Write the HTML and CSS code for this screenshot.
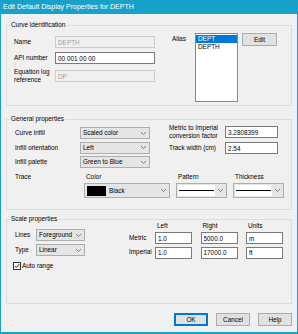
FILE: index.html
```html
<!DOCTYPE html>
<html>
<head>
  <title>Edit Default Display Properties for DEPTH</title>
  <link rel="stylesheet" href="styles.css">
</head>
<body>
  <div class="window">
    <div class="titlebar">Edit Default Display Properties for DEPTH</div>

    <div class="client">
      <fieldset class="group group-ident">
        <legend>Curve identification</legend>
        <div class="ident">
          <div class="ident-fields">
            <label for="name">Name</label>
            <input class="text" type="text" id="name" value="DEPTH" disabled>
            <label for="api">API number</label>
            <input class="text" type="text" id="api" value="00 001 00 00">
            <label for="eqref">Equation log<br>reference</label>
            <input class="text" type="text" id="eqref" value="DP" disabled>
          </div>
          <span class="alias-label">Alias</span>
          <div class="listbox">
            <div class="item selected">DEPT</div>
            <div class="item">DEPTH</div>
          </div>
          <button type="button" class="btn edit-btn">Edit</button>
        </div>
      </fieldset>

      <fieldset class="group group-general">
        <legend>General properties</legend>
        <div class="general">
          <div class="general-top">
            <div class="infill-fields">
              <span class="lbl">Curve infill</span>
              <div class="combo"><span>Scaled color</span><svg width="5" height="3" viewBox="0 0 5 3"><polyline points="0,0 2.5,2.5 5,0" fill="none" stroke="#666" stroke-width="0.8"/></svg></div>
              <span class="lbl">Infill orientation</span>
              <div class="combo"><span>Left</span><svg width="5" height="3" viewBox="0 0 5 3"><polyline points="0,0 2.5,2.5 5,0" fill="none" stroke="#666" stroke-width="0.8"/></svg></div>
              <span class="lbl">Infill palette</span>
              <div class="combo"><span>Green to Blue</span><svg width="5" height="3" viewBox="0 0 5 3"><polyline points="0,0 2.5,2.5 5,0" fill="none" stroke="#666" stroke-width="0.8"/></svg></div>
            </div>
            <div class="factor-fields">
              <label for="factor">Metric to Imperial<br>conversion factor</label>
              <input class="text" type="text" id="factor" value="3.2808399">
              <label for="track">Track width (cm)</label>
              <input class="text" type="text" id="track" value="2.54">
            </div>
          </div>
          <div class="trace">
            <span class="lbl">Trace</span>
            <span class="col-head">Color</span>
            <span class="col-head">Pattern</span>
            <span class="col-head">Thickness</span>
            <span></span>
            <div class="combo tall"><span class="swatch-wrap"><span class="swatch"></span>Black</span><svg width="5" height="3" viewBox="0 0 5 3"><polyline points="0,0 2.5,2.5 5,0" fill="none" stroke="#666" stroke-width="0.8"/></svg></div>
            <div class="combo tall"><span class="line-sample"><span class="line"></span></span><svg width="5" height="3" viewBox="0 0 5 3"><polyline points="0,0 2.5,2.5 5,0" fill="none" stroke="#666" stroke-width="0.8"/></svg></div>
            <div class="combo tall"><span class="line-sample"><span class="line"></span></span><svg width="5" height="3" viewBox="0 0 5 3"><polyline points="0,0 2.5,2.5 5,0" fill="none" stroke="#666" stroke-width="0.8"/></svg></div>
          </div>
        </div>
      </fieldset>

      <fieldset class="group group-scale">
        <legend>Scale properties</legend>
        <div class="scale">
          <div class="scale-left">
            <div class="scale-fields">
              <span class="lbl">Lines</span>
              <div class="combo"><span>Foreground</span><svg width="5" height="3" viewBox="0 0 5 3"><polyline points="0,0 2.5,2.5 5,0" fill="none" stroke="#666" stroke-width="0.8"/></svg></div>
              <span class="lbl">Type</span>
              <div class="combo"><span>Linear</span><svg width="5" height="3" viewBox="0 0 5 3"><polyline points="0,0 2.5,2.5 5,0" fill="none" stroke="#666" stroke-width="0.8"/></svg></div>
            </div>
            <div class="check-row">
              <svg width="8" height="8" viewBox="0 0 8 8"><rect x="0.5" y="0.5" width="7" height="7" fill="#fff" stroke="#333"/><polyline points="1.8,4 3.3,5.6 6.3,2.2" fill="none" stroke="#222" stroke-width="1"/></svg>
              <span>Auto range</span>
            </div>
          </div>
          <div class="range-grid">
            <span></span>
            <span class="col-head">Left</span>
            <span class="col-head">Right</span>
            <span class="col-head">Units</span>
            <span class="lbl">Metric</span>
            <input class="text" type="text" value="1.0">
            <input class="text" type="text" value="5000.0">
            <input class="text" type="text" value="m">
            <span class="lbl">Imperial</span>
            <input class="text" type="text" value="1.0">
            <input class="text" type="text" value="17000.0">
            <input class="text" type="text" value="ft">
          </div>
        </div>
      </fieldset>

      <div class="buttons">
        <button type="button" class="btn default">OK</button>
        <button type="button" class="btn">Cancel</button>
        <button type="button" class="btn">Help</button>
      </div>
    </div>
  </div>
</body>
</html>
```

FILE: styles.css
```css
* {
  box-sizing: border-box;
}

body {
  margin: 0;
  font-family: "Liberation Sans", Arial, sans-serif;
  font-size: 6.4px;
  line-height: 8px;
  color: #000;
  background: #f0f0f0;
}

.window {
  width: 298px;
  height: 334px;
  background: #f0f0f0;
  border: 1px solid #19a2c9;
  border-top: none;
  border-bottom-width: 2px;
  display: flex;
  flex-direction: column;
}

.titlebar {
  height: 14px;
  background: #19a2c9;
  color: #fff;
  font-size: 7px;
  line-height: 14px;
  padding-left: 2px;
}

.client {
  padding: 7px 5px 0;
}

fieldset.group {
  margin: 0;
  padding: 0;
  border: 1px solid #dcdcdc;
  min-width: 0;
}

legend {
  margin-left: 3px;
  padding: 0 1px;
  line-height: 8px;
  height: 8px;
}

.text {
  display: block;
  width: 100%;
  height: 12px;
  margin: 0;
  padding: 0 2px;
  border: 1px solid #7a7a7a;
  background: #fff;
  font: inherit;
  color: #000;
  outline: none;
}

.text:disabled {
  background: #f0f0f0;
  border-color: #cccccc;
  color: #a0a0a0;
}

.btn {
  height: 13px;
  margin: 0;
  padding: 0;
  border: 1px solid #adadad;
  background: #e1e1e1;
  font: inherit;
  color: #000;
}

.combo {
  height: 12px;
  border: 1px solid #adadad;
  background: #e5e5e5;
  display: flex;
  align-items: center;
  justify-content: space-between;
  padding-left: 2px;
  padding-right: 3px;
}

.combo.tall {
  height: 15px;
  padding-left: 2px;
}

/* curve identification */
.ident {
  display: flex;
  align-items: flex-start;
  padding: 4px 6px 3px 7px;
}

.ident-fields {
  margin-top: 3px;
  display: grid;
  grid-template-columns: 41px 100px;
  grid-template-rows: 12px 12px 16px;
  row-gap: 4px;
  align-items: center;
}

.alias-label {
  margin-left: 17px;
  margin-top: 2px;
  width: 23px;
}

.listbox {
  width: 43px;
  height: 69px;
  border: 1px solid #828790;
  background: #fff;
  padding: 1px 0;
}

.listbox .item {
  height: 8px;
  padding-left: 2px;
  margin: 0 0 0 0;
}

.listbox .item.selected {
  background: #0078d7;
  color: #fff;
}

.edit-btn {
  margin-left: 4px;
  width: 35px;
}

/* general properties */
.group-general {
  margin-top: 9px !important;
}

.general {
  padding: 1px 6px 11px 7px;
}

.general-top {
  display: flex;
  align-items: flex-start;
}

.infill-fields {
  margin-top: 3px;
  display: grid;
  grid-template-columns: 66px 70px;
  grid-auto-rows: 12px;
  row-gap: 2.5px;
  align-items: center;
}

.lbl {
  padding-left: 1px;
}

.factor-fields {
  margin-left: 19px;
  display: grid;
  grid-template-columns: 56px 53px;
  grid-template-rows: 16px 12px;
  row-gap: 2px;
  align-items: center;
}

.trace {
  margin-top: 5px;
  display: grid;
  grid-template-columns: 64px 86px 51px 51px;
  grid-template-rows: 8px 15px;
  column-gap: 6px;
  row-gap: 2px;
}

.col-head {
  padding-left: 2px;
}

.swatch-wrap {
  display: flex;
  align-items: center;
}

.swatch {
  width: 19px;
  height: 10px;
  background: #000;
  margin-right: 3px;
}

.line-sample {
  flex: 1;
  height: 11px;
  margin-right: 3px;
  margin-left: -1px;
  background: #fff;
  display: flex;
  align-items: center;
  padding: 0 1px;
}

.line-sample .line {
  flex: 1;
  height: 1px;
  background: #000;
}

/* scale properties */
.group-scale {
  margin-top: 5px !important;
}

.scale {
  display: flex;
  align-items: flex-start;
  padding: 0 6px 33px 7px;
}

.scale-left {
  margin-top: 6px;
}

.scale-fields {
  display: grid;
  grid-template-columns: 22px 49px;
  grid-auto-rows: 12px;
  row-gap: 3px;
  align-items: center;
}

.check-row {
  margin-top: 6px;
  margin-left: -1px;
  display: flex;
  align-items: center;
  height: 8px;
}

.check-row span {
  margin-left: 1px;
}

.range-grid {
  margin-left: 43px;
  margin-top: -1px;
  display: grid;
  grid-template-columns: 18.5px 37px 37px 37px;
  grid-template-rows: 8px 12px 12px;
  column-gap: 8.5px;
  row-gap: 2px;
  align-items: center;
}

.range-grid .text:nth-of-type(n+4) {
  margin-top: 1px;
}

/* dialog buttons */
.buttons {
  margin-top: 9px;
  display: flex;
  justify-content: flex-end;
  gap: 8px;
}

.buttons .btn {
  width: 34px;
}

.buttons .btn.default {
  border-color: #0078d7;
  box-shadow: inset 0 0 0 1px #0078d7;
}
```
